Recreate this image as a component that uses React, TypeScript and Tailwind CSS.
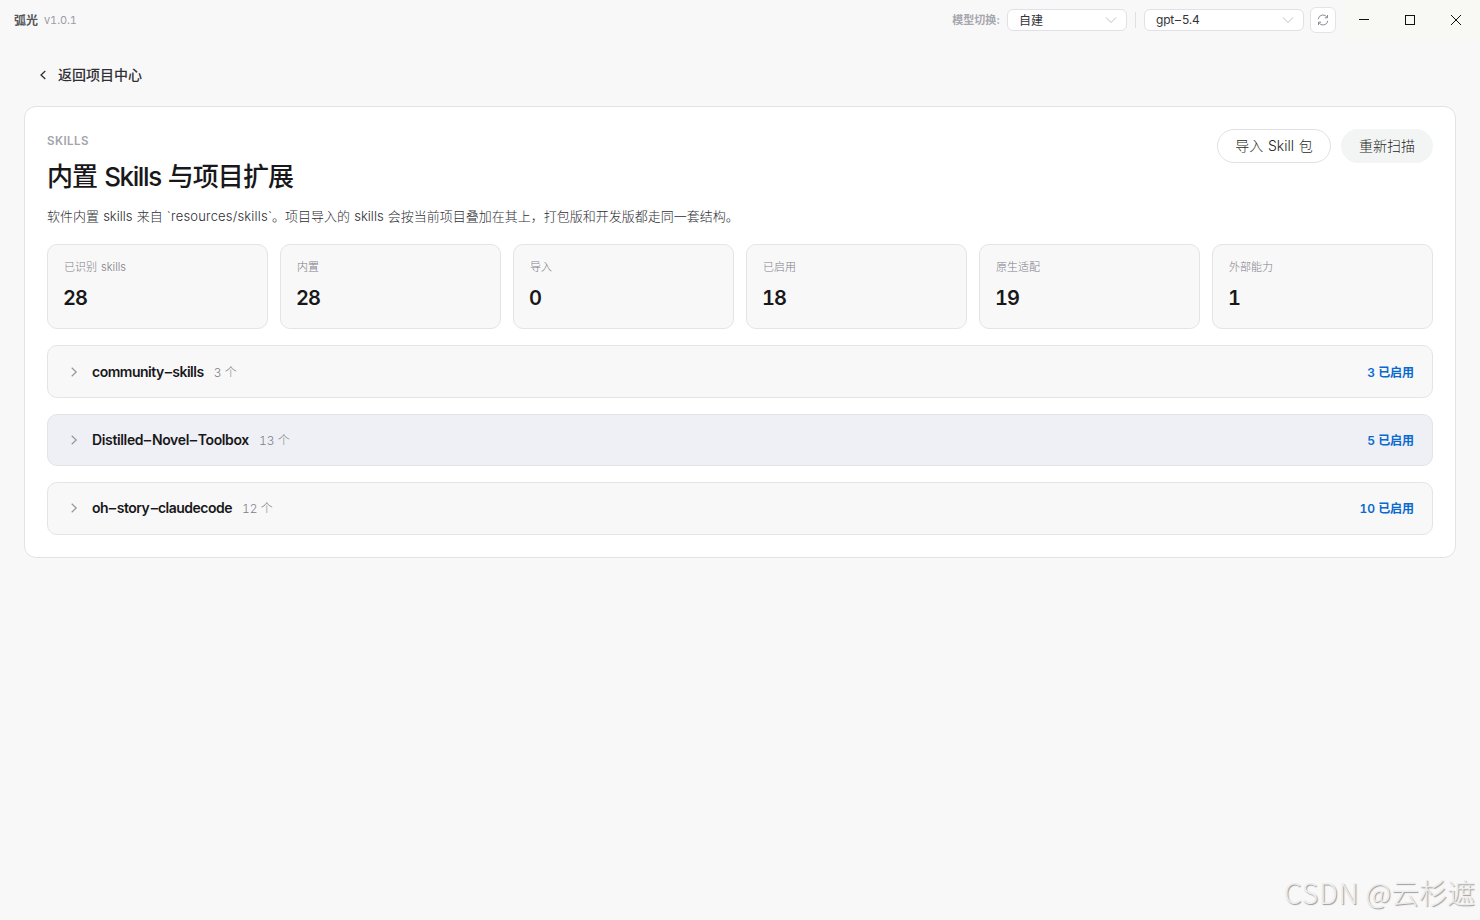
import React from 'react';

const stats = [
  { label: '已识别 skills', value: 28 },
  { label: '内置', value: 28 },
  { label: '导入', value: 0 },
  { label: '已启用', value: 18 },
  { label: '原生适配', value: 19 },
  { label: '外部能力', value: 1 },
];

const groups = [
  { name: 'community-skills', count: 3, enabled: 3, bg: 'bg-[#f8f8f8]', tracking: 'tracking-[-0.5px]' },
  { name: 'Distilled-Novel-Toolbox', count: 13, enabled: 5, bg: 'bg-[#eff0f5]', tracking: 'tracking-[-0.36px]' },
  { name: 'oh-story-claudecode', count: 12, enabled: 10, bg: 'bg-[#f8f8f8]', tracking: 'tracking-[-0.5px]' },
];

/* Names are set with a wide dash between the words. */
function Hyphenated({ text }: { text: string }) {
  return (
    <>
      {text.split('-').map((part, i) => (
        <React.Fragment key={i}>
          {i > 0 && <span className="mx-[1.3px] inline-block scale-x-[1.6]">-</span>}
          {part}
        </React.Fragment>
      ))}
    </>
  );
}

function ChevronDown() {
  return (
    <svg width="12" height="12" viewBox="0 0 12 12" fill="none" stroke="#c0c0c4" strokeWidth="1">
      <path d="M1 3.5 6 8.5 11 3.5" />
    </svg>
  );
}

function TitleBar() {
  return (
    <header className="flex h-10 items-center">
      <span className="ml-3.5 pt-px text-xs font-bold text-[#55555a]">弧光</span>
      <span className="ml-1.5 pt-px text-[11px] text-[#9c9ca3] tabular-nums tracking-[-0.1px]">v1.0.1</span>
      <div className="ml-auto flex items-center">
        <span className="mr-[7px] text-[11px] font-bold text-[#a6a6ae]">模型切换:</span>
        <div className="flex h-[22px] w-[120px] items-center justify-between rounded-md border border-[#e0e0e6] bg-white pl-[11px] pr-[9px] text-xs text-[#333338]">
          <span className="pt-px">自建</span>
          <ChevronDown />
        </div>
        <div className="mx-2 h-4 w-px bg-[#e0e0e4]" />
        <div className="flex h-[22px] w-40 items-center justify-between rounded-md border border-[#e0e0e6] bg-white pl-[11px] pr-[9px] text-xs text-[#333338]">
          <span className="tracking-[-0.2px]"><Hyphenated text="gpt-5.4" /></span>
          <ChevronDown />
        </div>
        <button className="ml-1.5 flex size-[26px] items-center justify-center rounded-md border border-[#e3e3e6] bg-white">
          <svg width="12" height="12" viewBox="0 0 12 12" fill="none" stroke="#8c8c94" strokeWidth="1">
            <path d="M1.2 5.2A4.8 4.8 0 0 1 10.3 3.7M10.5 1v2.8H7.8M10.8 6.8A4.8 4.8 0 0 1 1.7 8.3M1.5 11V8.2h2.7" />
          </svg>
        </button>
      </div>
      <div className="ml-[7px] flex h-10 w-[137px] bg-[#f8f8f5]">
        <div className="flex w-[42px] items-center justify-center">
          <svg width="10" height="10" shapeRendering="crispEdges"><path d="M0 4h10v1H0z" fill="#111" /></svg>
        </div>
        <div className="flex w-[50px] items-center justify-center">
          <svg width="10" height="10" shapeRendering="crispEdges"><path d="M.5.5h9v9h-9z" fill="none" stroke="#111" /></svg>
        </div>
        <div className="flex w-[42px] items-center justify-center">
          <svg width="10" height="10"><path d="M0 0 10 10M10 0 0 10" stroke="#111" /></svg>
        </div>
      </div>
    </header>
  );
}

export default function App() {
  return (
    <div className="relative h-[920px] w-[1480px] overflow-hidden bg-[#f8f8f8] font-['Inter','Noto_Sans_CJK_SC',sans-serif] text-[#18181b]">
      <TitleBar />
      <button className="ml-[38px] mt-[23px] flex h-6 items-center text-sm font-medium text-[#303034]">
        <svg width="10" height="12" viewBox="0 0 10 12" fill="none" stroke="currentColor" strokeWidth="1.3">
          <path d="M7.3 2 3 6l4.3 4" />
        </svg>
        <span className="ml-2.5">返回项目中心</span>
      </button>

      <main className="mx-6 mt-[19px] h-[452px] rounded-[12px] border border-[#e3e3e5] bg-white px-[22px] pt-[22px]">
        <div className="flex h-[115px] justify-between">
          <div>
            <div className="mt-1 h-4 text-[11.5px] leading-4 font-semibold text-[#a3a3ab] tracking-[0.45px]">SKILLS</div>
            <h1 className="mt-[7px] text-[26px] leading-[42px] font-medium tracking-[-0.9px] [word-spacing:0.9px]">
              内置 <span className="tracking-[-1.4px]">Skills</span> 与项目扩展
            </h1>
            <p className="mt-2 text-[13px] leading-5 font-light text-[#2e2e34] [word-spacing:0.5px]">
              软件内置 skills 来自 <span className="tracking-[0.18px]">`resources/skills`</span>。项目导入的 skills 会按当前项目叠加在其上，打包版和开发版都走同一套结构。
            </p>
          </div>
          <div className="flex gap-2.5 text-sm font-light text-[#1f1f23]">
            <button className="h-[34px] w-[114px] rounded-full border border-[#e0e0e6] [word-spacing:0.8px]">导入 Skill 包</button>
            <button className="h-[34px] w-[92px] rounded-full bg-[#f3f5f5]">重新扫描</button>
          </div>
        </div>

        <section className="grid grid-cols-6 gap-3">
          {stats.map((s) => (
            <div key={s.label} className="h-[85px] rounded-[10px] border border-[#e4e4e6] bg-[#f8f8f8] px-4 pt-3.5">
              <div className="text-[11px] leading-4 font-light text-[#7e7e88] [word-spacing:1px]">{s.label}</div>
              <div className="mt-2 -ml-px text-[20px] leading-[30px] font-semibold tabular-nums tracking-[-0.9px]">{s.value}</div>
            </div>
          ))}
        </section>

        <section className="mt-[16.4px] flex flex-col gap-4">
          {groups.map((g) => (
            <div key={g.name} className={`flex h-[52.4px] items-center rounded-[10px] border border-[#e4e4e6] px-[18px] ${g.bg}`}>
              <svg width="16" height="16" viewBox="0 0 16 16" fill="none" stroke="#96969e" strokeWidth="1.2">
                <path d="m5.7 3.8 4.5 4.2-4.5 4.2" />
              </svg>
              <span className={`ml-2.5 text-sm font-semibold ${g.tracking}`}><Hyphenated text={g.name} /></span>
              <span className="ml-2.5 pt-0.5 text-xs font-light text-[#7e7e88] tabular-nums">{g.count} 个</span>
              <span className="ml-auto pt-0.5 text-xs font-semibold tabular-nums text-[#0969cf] tracking-[-0.05px]">{g.enabled} 已启用</span>
            </div>
          ))}
        </section>
      </main>

      <div className="absolute right-[5px] bottom-[6px] font-['Noto_Sans_CJK_SC',sans-serif] text-[28px] leading-[44px] font-light whitespace-nowrap text-[#ededed] [text-shadow:1px_1px_1px_#999]">
        <span className="tracking-[0.9px]">CSDN</span> @云杉遮
      </div>
    </div>
  );
}
